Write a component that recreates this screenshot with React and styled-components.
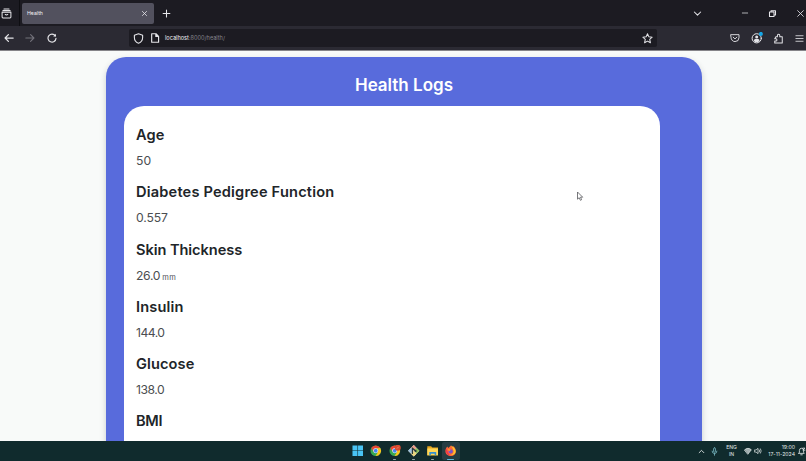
import React from "react";
import styled, { createGlobalStyle } from "styled-components";

const GlobalStyle = createGlobalStyle`
  * { box-sizing: border-box; }
  body { margin: 0; overflow: hidden; background: #f8faf9; }
`;

const Screen = styled.div`
  width: 806px;
  height: 461px;
  display: flex;
  flex-direction: column;
  overflow: hidden;
  font-family: Inter, "Open Sans", sans-serif;
`;

const TabBar = styled.header`
  flex: 0 0 26px;
  display: flex;
  align-items: center;
  background: #1c1b22;
  color: #e6e6ea;
`;

const Slot = styled.span`
  flex: 0 0 ${(p) => p.$w}px;
  display: flex;
  align-items: center;
  justify-content: center;
  color: ${(p) => p.$color || "inherit"};
`;

const Divider = styled.span`
  width: 1px;
  height: 26px;
  margin: 0 2px 0 6px;
  background: #0e0e12;
`;

const Tab = styled.div`
  width: 132px;
  height: 21px;
  padding: 0 5px;
  display: flex;
  align-items: center;
  justify-content: space-between;
  border-radius: 2px;
  background: #52515e;
`;

const TabTitle = styled.span`
  font-size: 5.2px;
  color: #f3f3f6;
`;

const Spacer = styled.span`
  flex: 1;
`;

const WindowControls = styled.div`
  display: flex;
  margin: 0 -7.5px 0 21px;
`;

const Toolbar = styled.nav`
  flex: 0 0 25px;
  display: flex;
  align-items: center;
  background: #2b2a33;
  border-bottom: 1px solid #858489;
  color: #e4e4e8;
`;

const AddressBar = styled.div`
  width: 528px;
  height: 18px;
  margin-left: 68px;
  display: flex;
  align-items: center;
  border-radius: 2px;
  background: #1c1b22;
`;

const Address = styled.span`
  margin-left: 3px;
  font-size: 5.6px;
  color: #85848c;
`;

const Host = styled.span`
  color: #eeeef2;
`;

const ToolbarActions = styled.div`
  display: flex;
  margin-right: -4px;
`;

const Page = styled.main`
  flex: 0 0 390px;
  overflow: hidden;
  padding: 6px 0 0 106.4px;
  background: #f8faf9;
`;

const Card = styled.section`
  width: 595.2px;
  height: 440px;
  padding: 0 41.6px 0 18px;
  border-radius: 20px;
  background: #586bdc;
  box-shadow: 0 3px 6px rgba(40, 50, 60, 0.22);
`;

const CardTitle = styled.h1`
  height: 49px;
  margin: 0 -23.6px 0 0;
  padding-top: 6.5px;
  text-align: center;
  font-size: 17px;
  font-weight: 600;
  line-height: 43px;
  letter-spacing: 0;
  color: #fff;
`;

const Panel = styled.div`
  height: 400px;
  padding: 17.3px 12px 0 11.6px;
  border-radius: 20px;
  background: #fff;
`;

const Record = styled.div`
  height: 57.2px;
`;

const RecordName = styled.h2`
  margin: 0;
  height: 24px;
  font-size: 14.6px;
  font-weight: 600;
  line-height: 24px;
  letter-spacing: ${(p) => p.$track}px;
  color: #212529;
`;

const RecordValue = styled.p`
  margin: 0;
  height: 26px;
  font-size: 12.2px;
  line-height: 28px;
  letter-spacing: ${(p) => p.$track}px;
  color: #4b4e51;
`;

const Unit = styled.small`
  margin-left: 2px;
  font-size: 7.5px;
  letter-spacing: 0.3px;
`;

const Cursor = styled.svg`
  position: absolute;
  left: 575.5px;
  top: 191px;
`;

const Taskbar = styled.footer`
  flex: 0 0 20px;
  display: flex;
  align-items: center;
  padding-left: 348px;
  background: #102b2d;
  color: #e3e9e9;
`;

const AppButton = styled.span`
  width: ${(p) => (p.$active ? 18 : 18.8)}px;
  height: 18px;
  display: flex;
  flex-direction: column;
  align-items: center;
  justify-content: flex-end;
  gap: 1px;
  border-radius: 2px;
  background: ${(p) => (p.$active ? "#263d43" : "transparent")};
`;

const Marker = styled.span`
  width: ${(p) => (p.$state === "active" ? 7 : 3)}px;
  height: 1.4px;
  margin-top: 1px;
  border-radius: 1px;
  background: ${(p) => ({ active: "#62b9db", open: "#94a7aa" })[p.$state] || "transparent"};
`;

const Language = styled.span`
  width: 21px;
  font-size: 5.1px;
  line-height: 7px;
  text-align: center;
`;

const Clock = styled.span`
  width: 33px;
  margin-right: 2px;
  font-size: 5.2px;
  line-height: 7px;
  text-align: right;
  white-space: nowrap;
`;

const Icon = ({ size = 10, sw = 1.1, children }) => (
  <svg width={size} height={size} viewBox="0 0 12 12" fill="none" stroke="currentColor" strokeWidth={sw} strokeLinecap="round" strokeLinejoin="round">
    {children}
  </svg>
);

const Chrome = () => (
  <>
    <circle cx="6" cy="6" r="5.5" fill="#37a853" />
    <path d="M1.2 3.2A5.5 5.5 0 0 1 10.8 3.25L6 3.4 3.8 7Z" fill="#e94435" />
    <path d="M10.8 3.25A5.5 5.5 0 0 1 5.8 11.5L8.4 7.3 7.4 3.3Z" fill="#fbc51b" />
    <circle cx="6" cy="6" r="2.6" fill="#fff" />
    <circle cx="6" cy="6" r="2" fill="#4285f4" />
  </>
);

const appArt = {
  windows: <path fill="#49c4f4" d="M.5.5h5.2v5.2H.5zM6.3.5h5.2v5.2H6.3zM.5 6.3h5.2v5.2H.5zM6.3 6.3h5.2v5.2H6.3z" />,
  chrome: <Chrome />,
  profile: (
    <>
      <Chrome />
      <circle cx="9.2" cy="2.8" r="3.1" fill="#d94c31" />
      <path d="m8.2 3.8 2-2" stroke="#f29b78" strokeWidth=".8" />
    </>
  ),
  git: (
    <>
      <path d="M6 .1 11.9 6 6 11.9.1 6Z" fill="#d9dfdd" />
      <path d="M6 .1 3.1 3 6 6 3 8.9.1 6Z" fill="#9fc1dc" />
      <path d="M6 .1 8.9 3 6 6 3.1 3Z" fill="#ed9b86" />
      <path d="M8.9 3 11.9 6 8.9 9 6 6Z" fill="#8bbd58" />
      <path d="M6 6 8.9 9 6 11.9 3.1 9Z" fill="#ead47e" />
      <path d="M4.6 2.5v7M4.7 3.5 8 6.2" stroke="#27383b" strokeWidth="1.3" />
      <circle cx="8" cy="6.2" r="1.1" fill="#27383b" />
    </>
  ),
  folder: (
    <>
      <path d="M.3 1.2h4l1.2 1.4h6.2v8.2H.3Z" fill="#e8a71e" />
      <path d="M.3 3.6h11.4v7.2H.3Z" fill="#ffd757" />
      <path d="M2.4 7.2h7.2v3.6H8V9H4v1.8H2.4Z" fill="#328fd0" />
    </>
  ),
  firefox: (
    <>
      <path d="M1.1 3.5 2.3 1.6 3.5 3 6.2.4 7.8 2.1 9 1.3C13.3 5.7 11.2 11.6 6 11.6 1.1 11.6-.7 7.2 1.1 3.5Z" fill="#ff6736" />
      <path d="M6.2.4c3.9 1.8 5.7 5.1 4.7 7.5C9.9 10.4 7.4 11 5.5 10 10 9.7 10 5.4 6.2.4Z" fill="#ffc62e" />
      <path d="M1.1 3.5C.3 7 1.8 10.4 5.2 11.4L3 7.2Z" fill="#ef344e" />
      <circle cx="5.9" cy="6.7" r="2.2" fill="#7954ca" />
      <path d="M3 4.3c1.3-.4 2.4 0 3 .9L4.2 6.5Z" fill="#ff9b2c" />
    </>
  ),
};

const apps = [
  ["windows"],
  ["chrome"],
  ["profile", "open"],
  ["git", "open"],
  ["folder", "open"],
  ["firefox", "active"],
];

const records = [
  { name: "Age", value: "50", track: 0.12, valueTrack: 0 },
  { name: "Diabetes Pedigree Function", value: "0.557", track: 0.19, valueTrack: -0.1 },
  { name: "Skin Thickness", value: "26.0", unit: "mm", track: -0.06, valueTrack: -0.3 },
  { name: "Insulin", value: "144.0", track: 0.16, valueTrack: -0.55 },
  { name: "Glucose", value: "138.0", track: 0.1, valueTrack: -0.5 },
  { name: "BMI", track: -0.25 },
];

export default function App() {
  return (
    <Screen>
      <GlobalStyle />
      <TabBar>
        <Slot $w={13}>
          <Icon size={11}><path d="M1.2 4.5h9.6v5.3q0 1-1 1H2.2q-1 0-1-1ZM2 2.8h8M3.2 1h5.6M4.6 7q1.4 1.4 2.8 0" /></Icon>
        </Slot>
        <Divider />
        <Tab>
          <TabTitle>Health</TabTitle>
          <Slot $w={10}><Icon size={7} sw={1.4}><path d="m2.5 2.5 7 7m0-7-7 7" /></Icon></Slot>
        </Tab>
        <Slot $w={25}><Icon size={9} sw={1.4}><path d="M6 1.5v9M1.5 6h9" /></Icon></Slot>
        <Spacer />
        <Slot $w={26}><Icon size={9} sw={1.4}><path d="m1.8 4 4.2 4.2L10.2 4" /></Icon></Slot>
        <WindowControls>
          <Slot $w={27}><Icon size={8}><path d="M2 6h8" /></Icon></Slot>
          <Slot $w={28}><Icon size={9} sw={1.4}><path d="M2 4.1h6v5.8H2ZM4 4V2.2h6v5.9H8.3" /></Icon></Slot>
          <Slot $w={27}><Icon size={9}><path d="m2.2 2.2 7.6 7.6m0-7.6L2.2 9.8" /></Icon></Slot>
        </WindowControls>
      </TabBar>

      <Toolbar>
        <Slot $w={17}><Icon sw={1.5}><path d="M11 6H1.3m4-4-4 4 4 4" /></Icon></Slot>
        <Slot $w={26} $color="#73727b"><Icon sw={1.3}><path d="M1 6h9.7m-4-4 4 4-4 4" /></Icon></Slot>
        <Slot $w={18}>
          <Icon sw={1.4}><path d="M10 3.4A4.8 4.8 0 1 0 10.8 6.5" /><path d="M10.7 1v3.3H7.4Z" fill="currentColor" stroke="none" /></Icon>
        </Slot>
        <AddressBar>
          <Slot $w={19}><Icon size={11} sw={1.2}><path d="M6 .9 10.5 2.5v2.3C10.5 8 8.7 10 6 11.2 3.3 10 1.5 8 1.5 4.8V2.5Z" /></Icon></Slot>
          <Slot $w={14}><Icon sw={1.4}><path d="M2 .9h5.2L10.3 4v7.1H2ZM7 1v3.2h3.2" /></Icon></Slot>
          <Address><Host>localhost</Host>:8000/health/</Address>
          <Spacer />
          <Slot $w={19}><Icon size={11}><path d="m6 .9 1.5 3.3 3.6.4-2.7 2.4.8 3.6L6 8.8l-3.2 1.8.8-3.6L.9 4.6l3.6-.4Z" /></Icon></Slot>
        </AddressBar>
        <Spacer />
        <ToolbarActions>
          <Slot $w={22}><Icon><path d="M1.2 2h9.6v3.5a4.8 4.8 0 0 1-9.6 0ZM3.8 5 6 7.1 8.2 5" /></Icon></Slot>
          <Slot $w={22}>
            <Icon size={12} sw={1}>
              <circle cx="5.7" cy="6.3" r="4.6" />
              <circle cx="5.7" cy="5" r="1.5" fill="currentColor" stroke="none" />
              <path d="M2.8 9Q3 7 4.3 7h2.8q1.3 0 1.5 2Q5.7 11.5 2.8 9Z" fill="currentColor" stroke="none" />
              <circle cx="9.9" cy="1.9" r="2" fill="#15a8e8" stroke="none" />
            </Icon>
          </Slot>
          <Slot $w={21}><Icon size={11}><path d="M3.2 4.2h1.6V2.6a1.3 1.3 0 0 1 2.6 0v1.6h2.7v6.7H1.9V8.7h1.2a1.2 1.2 0 0 0 0-2.4H1.9Z" /></Icon></Slot>
          <Slot $w={21}><Icon size={9}><path d="M1.2 2.3h9.6M1.2 6h9.6M1.2 9.7h9.6" /></Icon></Slot>
        </ToolbarActions>
      </Toolbar>

      <Page>
        <Card>
          <CardTitle>Health Logs</CardTitle>
          <Panel>
            {records.map((r) => (
              <Record key={r.name}>
                <RecordName $track={r.track}>{r.name}</RecordName>
                {r.value && (
                  <RecordValue $track={r.valueTrack}>{r.value}{r.unit && <Unit>{r.unit}</Unit>}</RecordValue>
                )}
              </Record>
            ))}
          </Panel>
        </Card>
      </Page>

      <Taskbar>
        {apps.map(([name, state]) => (
          <AppButton key={name} $active={state === "active"}>
            <svg width="11.5" height="11.5" viewBox="0 0 12 12">{appArt[name]}</svg>
            <Marker $state={state} />
          </AppButton>
        ))}
        <Spacer />
        <Slot $w={13}><Icon size={7} sw={1.5}><path d="m2 8 4-4 4 4" /></Icon></Slot>
        <Slot $w={13} $color="#79b9c3"><Icon size={9}><rect x="4.8" y="1" width="2.4" height="6" rx="1.2" /><path d="M2.8 5.5a3.2 3.2 0 0 0 6.4 0M6 8.7V11" /></Icon></Slot>
        <Language>ENG<br />IN</Language>
        <Slot $w={11}><Icon size={8}><path d="M1 4.2a7.5 7.5 0 0 1 10 0L6 10.5Z" fill="currentColor" fillOpacity=".7" /></Icon></Slot>
        <Slot $w={9}><Icon size={8}><path d="M1 4.5h2L6 2v8L3 7.5H1ZM8 4.3q1.3 1.7 0 3.4M9.8 2.8q2.2 3.2 0 6.4" /></Icon></Slot>
        <Clock>19:00<br />17-11-2024</Clock>
        <Slot $w={9}><Icon size={9}><path d="M2.3 8.5h7.4L8.8 7V4.5a2.8 2.8 0 0 0-5.6 0V7ZM5 10.4h2M7.8 1.5h2.8L7.8 4.2h2.8" /></Icon></Slot>
      </Taskbar>

      <Cursor width="8" height="11" viewBox="0 0 8 11">
        <path d="M1.5 1v7.2l1.7-1.5 1.2 2.6 1.2-.6-1.1-2.5h2.2Z" fill="#fff" stroke="#55575b" strokeWidth=".8" />
      </Cursor>
    </Screen>
  );
}
